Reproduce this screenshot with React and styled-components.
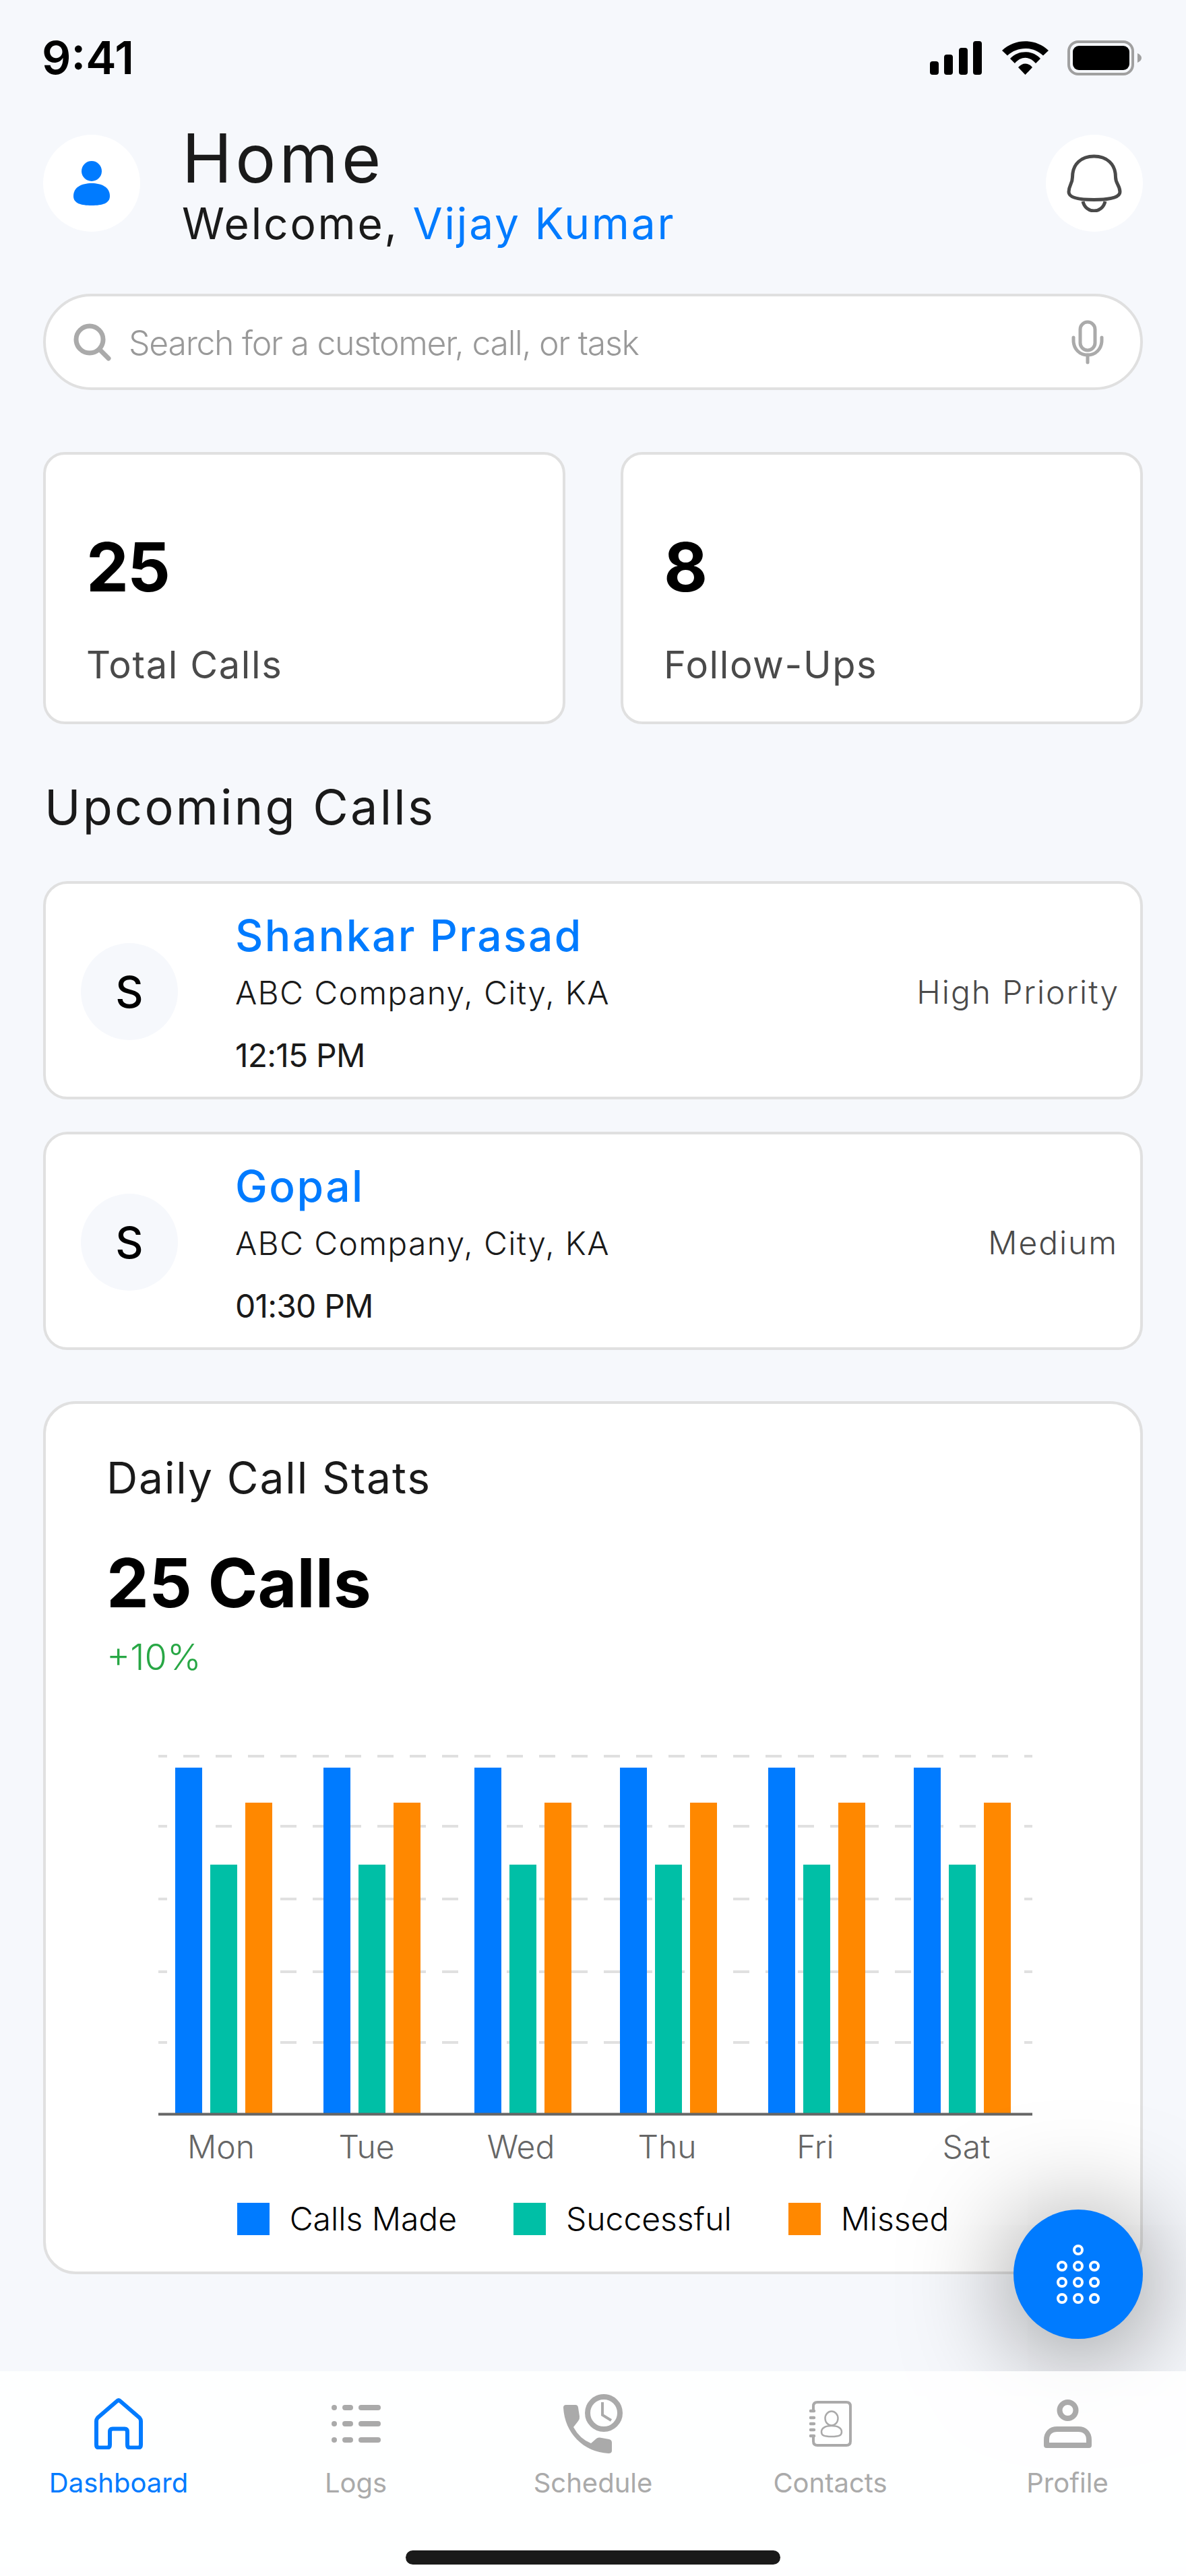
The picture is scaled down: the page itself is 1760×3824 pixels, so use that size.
import React from "react"
import styled, { createGlobalStyle } from "styled-components"

const GlobalStyle = createGlobalStyle`
  html, body {
    margin: 0;
    padding: 0;
    background: #f6f8fc;
  }
  * {
    box-sizing: border-box;
  }
`

const days = [
  { label: "Mon", x: 260, labelX: 328 },
  { label: "Tue", x: 480, labelX: 544 },
  { label: "Wed", x: 704, labelX: 773 },
  { label: "Thu", x: 920, labelX: 990 },
  { label: "Fri", x: 1140, labelX: 1210 },
  { label: "Sat", x: 1356, labelX: 1434 }
]

const series = [
  { name: "Calls Made", color: "#007bff", offset: 0, top: 24 },
  { name: "Successful", color: "#00bfa6", offset: 52, top: 168 },
  { name: "Missed", color: "#ff8800", offset: 104, top: 76 }
]

const calls = [
  { name: "Shankar Prasad", time: "12:15 PM", priority: "High Priority" },
  { name: "Gopal", time: "01:30 PM", priority: "Medium", inset: 2 }
]

const gridLines = [7, 111, 219, 327, 432]

const ProfileGlyph = () => (
  <svg width="54" height="66" viewBox="0 0 54 66" fill="#007bff">
    <circle cx="27" cy="15" r="15" />
    <path d="M27 33C42 33 54 39 54 52C54 63 43 66 27 66C11 66 0 63 0 52C0 39 12 33 27 33Z" />
  </svg>
)

const BellGlyph = () => (
  <svg width="82" height="86" viewBox="0 0 82 86" fill="none" stroke="#4a4a4a" strokeWidth="5">
    <path d="M8.5 34C8.5 14 22 3 40.5 3C59 3 72.5 14 72.5 34C72.5 44 79 46 79 56C79 66 56 67.5 40.5 67.5C25 67.5 3 66 3 56C3 46 8.5 44 8.5 34Z" />
    <path d="M24 70C26 79 33 84 40.5 84C48 84 55 79 57 70" />
  </svg>
)

const SignalGlyph = () => (
  <svg width="77" height="50" viewBox="0 0 77 50" fill="#000">
    <rect x="0" y="30" width="13" height="20" rx="4" />
    <rect x="21" y="20" width="13" height="30" rx="4" />
    <rect x="43" y="10" width="13" height="40" rx="4" />
    <rect x="64" y="0" width="13" height="50" rx="4" />
  </svg>
)

const WifiGlyph = () => (
  <svg width="69" height="50" viewBox="0 0 69 50" fill="#000">
    <path d="M0 14C19 -4.5 50 -4.5 69 14L61 21.5C46 7.5 23 7.5 8 21.5Z" />
    <path d="M12 26C24 13 45 13 57 26L50 33C41 22 28 22 19 33Z" />
    <path d="M24 39C30 31.5 39 31.5 45 39L34.5 50Z" />
  </svg>
)

const BatteryGlyph = () => (
  <svg width="110" height="52" viewBox="0 0 110 52">
    <rect x="2" y="2" width="95" height="48" rx="14" fill="none" stroke="#a0a0a0" strokeWidth="4" />
    <rect x="8" y="8" width="84" height="36" rx="9" fill="#000" />
    <path d="M104 19C108 21 110 23 110 26C110 29 108 31 104 33Z" fill="#a0a0a0" />
  </svg>
)

const SearchGlyph = () => (
  <svg width="56" height="56" viewBox="0 0 56 56" fill="none" stroke="#aaa" strokeWidth="7" strokeLinecap="round">
    <circle cx="24" cy="24" r="20" />
    <path d="M39 39L52 52" />
  </svg>
)

const MicGlyph = () => (
  <svg width="48" height="66" viewBox="0 0 48 66" fill="none" stroke="#aaa" strokeWidth="5" strokeLinecap="round">
    <rect x="13" y="3" width="22" height="42" rx="11" />
    <path d="M3 26V30C3 43 12 52 24 52C36 52 45 43 45 30V26" />
    <path d="M24 52V63" />
  </svg>
)

const DialGlyph = () => {
  const rings = [[32, 8]]
  ;[32, 56, 80].forEach(y => [8, 32, 56].forEach(x => rings.push([x, y])))
  return (
    <svg width="64" height="88" viewBox="0 0 64 88" fill="none" stroke="#fff" strokeWidth="4">
      {rings.map(([x, y]) => (
        <circle key={`${x}-${y}`} cx={x} cy={y} r="6" />
      ))}
    </svg>
  )
}

const HomeIcon = () => (
  <svg width="72" height="76" viewBox="0 0 72 76" fill="none" stroke="currentColor" strokeWidth="6">
    <path d="M33.5 4.5Q36 1.5 38.5 4.5L67 29Q69 31.5 69 34V69Q69 73.5 65 73.5H53Q49 73.5 49 69V50Q49 45.5 45 45.5H27Q23 45.5 23 50V69Q23 73.5 19 73.5H7Q3 73.5 3 69V34Q3 31.5 5 29Z" />
  </svg>
)

const LogsIcon = () => (
  <svg width="73" height="56" viewBox="0 0 73 56" fill="currentColor">
    {[0, 24, 48].map(y => (
      <g key={y}>
        <rect x="0" y={y} width="8" height="8" rx="4" />
        <rect x="16" y={y} width="16" height="8" rx="4" />
        <rect x="40" y={y} width="33" height="8" rx="4" />
      </g>
    ))}
  </svg>
)

const ScheduleIcon = () => (
  <svg width="88" height="88" viewBox="0 0 88 88" fill="none">
    <path
      fill="currentColor"
      d="M4 16H18Q21.5 16 22 20L24 33Q24.5 37 22 40L15 49Q24 66 41 73L49 66Q51 64 54 64.5L68 67Q72 68 72 72V84Q72 88 67 88C30 86 2 58 0 20Q0 16 4 16Z"
    />
    <circle cx="60" cy="28" r="24" stroke="currentColor" strokeWidth="8" />
    <path d="M58 12V31L71 39" stroke="currentColor" strokeWidth="4" />
  </svg>
)

const ContactsIcon = () => (
  <svg width="63" height="68" viewBox="0 0 63 68" fill="none" stroke="currentColor" strokeLinecap="round">
    <path strokeWidth="4" d="M6 15V8Q6 2 12 2H55Q61 2 61 8V60Q61 66 55 66H12Q6 66 6 60V52" />
    <path strokeWidth="4.5" d="M2 15H7M2 25H7M2 34H7M2 43H7M2 52H7" />
    <ellipse cx="33" cy="26" rx="9.5" ry="10.5" strokeWidth="2.5" />
    <path strokeWidth="2.5" d="M18 46C18 41 23 37 33 37C43 37 48 41 48 46C48 51 45 53 33 53C21 53 18 51 18 46Z" />
  </svg>
)

const ProfileIcon = () => (
  <svg width="71" height="72" viewBox="0 0 71 72" fill="none" stroke="currentColor" strokeWidth="8" strokeLinejoin="round">
    <circle cx="35.5" cy="16" r="12" />
    <path d="M4 68V60C4 50 10 44 20 44H51C61 44 67 50 67 60V68Z" />
  </svg>
)

const tabs = [
  { label: "Dashboard", icon: HomeIcon, active: true },
  { label: "Logs", icon: LogsIcon },
  { label: "Schedule", icon: ScheduleIcon },
  { label: "Contacts", icon: ContactsIcon },
  { label: "Profile", icon: ProfileIcon }
]

const App = () => (
  <>
    <GlobalStyle />
    <Screen>
      <StatusBar>
        <Clock>9:41</Clock>
        <StatusIcons>
          <SignalGlyph />
          <WifiGlyph />
          <BatteryGlyph />
        </StatusIcons>
      </StatusBar>

      <Content>
        <Header>
          <RoundButton>
            <ProfileGlyph />
          </RoundButton>
          <Greeting>
            <Title>Home</Title>
            <Welcome>
              Welcome, <Accent>Vijay Kumar</Accent>
            </Welcome>
          </Greeting>
          <RoundButton>
            <BellGlyph />
          </RoundButton>
        </Header>

        <SearchBar>
          <SearchGlyph />
          <Placeholder>Search for a customer, call, or task</Placeholder>
          <MicGlyph />
        </SearchBar>

        <StatRow>
          <StatCard>
            <StatValue>25</StatValue>
            <StatLabel>Total Calls</StatLabel>
          </StatCard>
          <StatCard>
            <StatValue>8</StatValue>
            <StatLabel>Follow-Ups</StatLabel>
          </StatCard>
        </StatRow>

        <SectionTitle>Upcoming Calls</SectionTitle>

        <CallList>
          {calls.map(call => (
            <CallCard key={call.name}>
              <Initial>S</Initial>
              <CallInfo>
                <CallName>{call.name}</CallName>
                <CallCompany>ABC Company, City, KA</CallCompany>
                <CallTime>{call.time}</CallTime>
              </CallInfo>
              <Priority $inset={call.inset}>{call.priority}</Priority>
            </CallCard>
          ))}
        </CallList>

        <ChartCard>
          <ChartTitle>Daily Call Stats</ChartTitle>
          <ChartValue>25 Calls</ChartValue>
          <ChartDelta>+10%</ChartDelta>
          <ChartSvg width="1297" height="620" viewBox="235 0 1297 620">
            {gridLines.map(y => (
              <line key={y} x1="235" x2="1532" y1={y} y2={y} stroke="#e0e0e0" strokeWidth="4" strokeDasharray="24 24" strokeDashoffset="11" />
            ))}
            {days.map(day =>
              series.map(bar => (
                <rect key={day.label + bar.name} x={day.x + bar.offset} y={bar.top} width="40" height={538 - bar.top} fill={bar.color} />
              ))
            )}
            <line x1="235" x2="1532" y1="538.5" y2="538.5" stroke="#666" strokeWidth="4" />
            {days.map(day => (
              <AxisLabel key={day.label} x={day.labelX} y="604" textAnchor="middle">
                {day.label}
              </AxisLabel>
            ))}
          </ChartSvg>
          <Legend>
            {series.map(item => (
              <LegendItem key={item.name}>
                <Swatch $color={item.color} />
                {item.name}
              </LegendItem>
            ))}
          </Legend>
        </ChartCard>
      </Content>

      <DialButton>
        <DialGlyph />
      </DialButton>

      <TabBar>
        <TabRow>
          {tabs.map(({ label, icon: Icon, active }) => (
            <Tab key={label} $active={active}>
              <TabIcon>
                <Icon />
              </TabIcon>
              <TabLabel>{label}</TabLabel>
            </Tab>
          ))}
        </TabRow>
        <HomeIndicator />
      </TabBar>
    </Screen>
  </>
)

export default App

const Screen = styled.div`
  position: relative;
  width: 1760px;
  height: 3824px;
  display: flex;
  flex-direction: column;
  overflow: hidden;
  background: #f6f8fc;
  font-family: Inter, "Liberation Sans", sans-serif;
  color: #1a1a1a;
`

const StatusBar = styled.div`
  height: 200px;
  padding: 50px 66px 0 62px;
  display: flex;
  justify-content: space-between;
  align-items: flex-start;
`

const Clock = styled.div`
  font-size: 68px;
  line-height: 70px;
  font-weight: 600;
  color: #000;
`

const StatusIcons = styled.div`
  display: flex;
  align-items: center;
  gap: 30px;
  margin-top: 10px;
  svg:last-child {
    margin-left: -2px;
  }
`

const Content = styled.main`
  padding: 0 64px;
  display: flex;
  flex-direction: column;
`

const Header = styled.header`
  height: 144px;
  display: flex;
  align-items: flex-start;
`

const RoundButton = styled.div`
  width: 144px;
  height: 144px;
  flex: none;
  border-radius: 50%;
  background: #fff;
  display: flex;
  align-items: center;
  justify-content: center;
`

const Greeting = styled.div`
  flex: 1;
  padding-left: 62px;
`

const Title = styled.h1`
  margin: 0;
  font-size: 100px;
  line-height: 70px;
  font-weight: 400;
  letter-spacing: 5px;
`

const Welcome = styled.div`
  margin-top: 30px;
  font-size: 64px;
  line-height: 64px;
  font-weight: 400;
  letter-spacing: 2.8px;
`

const Accent = styled.span`
  color: #007bff;
`

const SearchBar = styled.div`
  margin-top: 92px;
  height: 143px;
  border: 4px solid #e0e0e0;
  border-radius: 72px;
  background: #fff;
  padding: 0 54px 0 41px;
  display: flex;
  align-items: center;
`

const Placeholder = styled.div`
  flex: 1;
  padding: 3px 0 0 26px;
  font-size: 50px;
  font-weight: 300;
  letter-spacing: -1.3px;
  color: #999;
`

const StatRow = styled.div`
  margin-top: 92px;
  display: grid;
  grid-template-columns: 775px 775px;
  gap: 82px;
`

const StatCard = styled.div`
  height: 404px;
  border: 4px solid #e0e0e0;
  border-radius: 32px;
  background: #fff;
  padding: 117px 0 0 60px;
`

const StatValue = styled.div`
  font-size: 100px;
  line-height: 100px;
  font-weight: 700;
  letter-spacing: -2px;
  color: #000;
`

const StatLabel = styled.div`
  margin-top: 65px;
  font-size: 56px;
  line-height: 60px;
  font-weight: 400;
  letter-spacing: 1.6px;
  color: #4a4a4a;
`

const SectionTitle = styled.h2`
  margin: 83px 0 0 2px;
  font-size: 72px;
  line-height: 80px;
  font-weight: 400;
  letter-spacing: 3.2px;
`

const CallList = styled.div`
  margin-top: 70px;
  display: flex;
  flex-direction: column;
  gap: 48px;
`

const CallCard = styled.div`
  height: 324px;
  border: 4px solid #e0e0e0;
  border-radius: 36px;
  background: #fff;
  padding: 4px 0 0 52px;
  display: flex;
  align-items: center;
`

const Initial = styled.div`
  width: 144px;
  height: 144px;
  flex: none;
  border-radius: 50%;
  background: #f6f8fc;
  display: flex;
  align-items: center;
  justify-content: center;
  font-size: 64px;
  font-weight: 500;
  color: #000;
`

const CallInfo = styled.div`
  flex: 1;
  margin: 6px 0 0 85px;
`

const CallName = styled.div`
  font-size: 64px;
  line-height: 70px;
  font-weight: 500;
  letter-spacing: 2.5px;
  color: #007bff;
`

const CallCompany = styled.div`
  margin-top: 20px;
  font-size: 48px;
  line-height: 60px;
  font-weight: 300;
  letter-spacing: 1.3px;
`

const CallTime = styled.div`
  margin-top: 33px;
  font-size: 48px;
  line-height: 60px;
  font-weight: 400;
  letter-spacing: -0.8px;
`

const Priority = styled.div`
  margin-right: ${p => 31 + (p.$inset || 0)}px;
  font-size: 48px;
  font-weight: 300;
  letter-spacing: 1.9px;
  color: #4a4a4a;
`

const ChartCard = styled.section`
  margin-top: 76px;
  height: 1296px;
  border: 4px solid #e0e0e0;
  border-radius: 48px;
  background: #fff;
  padding: 80px 0 0 90px;
`

const ChartTitle = styled.div`
  font-size: 64px;
  line-height: 60px;
  font-weight: 400;
  letter-spacing: 1.9px;
`

const ChartValue = styled.div`
  margin-top: 76px;
  font-size: 100px;
  line-height: 100px;
  font-weight: 700;
  color: #000;
`

const ChartDelta = styled.div`
  margin-top: 30px;
  font-size: 54px;
  line-height: 60px;
  font-weight: 300;
  color: #28a745;
`

const ChartSvg = styled.svg`
  display: block;
  margin: 110px 0 0 77px;
`

const AxisLabel = styled.text`
  font-family: Inter, "Liberation Sans", sans-serif;
  font-size: 48px;
  font-weight: 300;
  fill: #666;
`

const Legend = styled.div`
  margin: 50px 0 0 -90px;
  display: flex;
  justify-content: center;
  gap: 84px;
`

const LegendItem = styled.div`
  display: flex;
  align-items: center;
  gap: 30px;
  font-size: 48px;
  line-height: 48px;
  font-weight: 300;
  color: #000;
`

const Swatch = styled.span`
  width: 48px;
  height: 48px;
  background: ${p => p.$color};
`

const DialButton = styled.div`
  position: absolute;
  left: 1504px;
  top: 3280px;
  z-index: 1;
  width: 192px;
  height: 192px;
  border-radius: 50%;
  background: #007bff;
  box-shadow: 0 16px 160px rgba(0, 0, 0, 0.5);
  display: flex;
  align-items: center;
  justify-content: center;
`

const TabBar = styled.nav`
  position: relative;
  z-index: 2;
  margin-top: auto;
  height: 304px;
  padding-top: 28px;
  background: rgba(255, 255, 255, 0.88);
  display: flex;
  flex-direction: column;
  align-items: center;
`

const TabRow = styled.div`
  width: 100%;
  display: grid;
  grid-template-columns: repeat(5, 352px);
`

const Tab = styled.div`
  display: flex;
  flex-direction: column;
  align-items: center;
  color: ${p => (p.$active ? "#007bff" : "#aaa")};
`

const TabIcon = styled.div`
  height: 100px;
  display: flex;
  align-items: center;
  justify-content: center;
`

const TabLabel = styled.div`
  margin-top: 14px;
  font-size: 40px;
  line-height: 48px;
  font-weight: 400;
`

const HomeIndicator = styled.div`
  margin-top: auto;
  margin-bottom: 17px;
  width: 556px;
  height: 21px;
  border-radius: 11px;
  background: #1a1a1a;
`
